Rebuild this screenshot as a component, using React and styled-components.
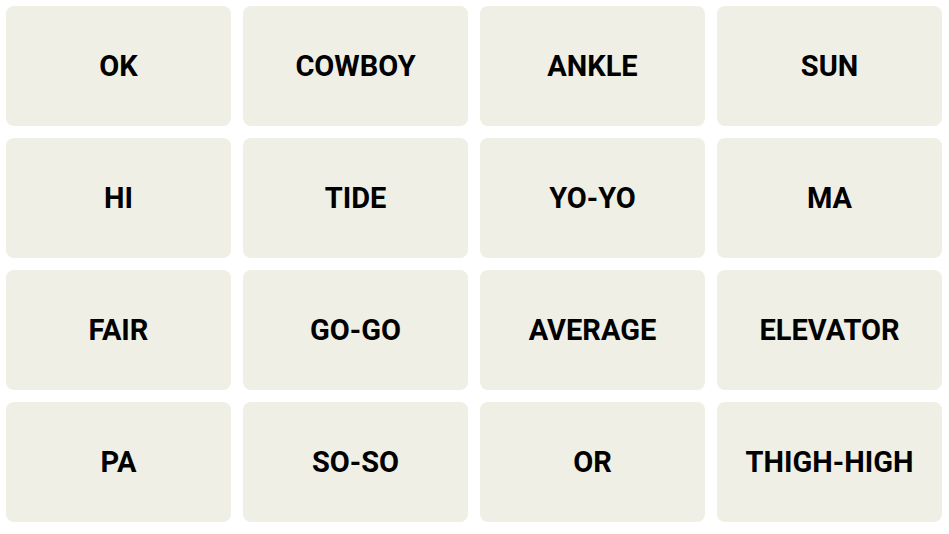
import React from "react";
import styled, { createGlobalStyle } from "styled-components";

const Global = createGlobalStyle`
  html, body { margin: 0; padding: 0; background: #fff; }
`;

const Board = styled.div`
  display: grid;
  grid-template-columns: repeat(4, 225px);
  grid-auto-rows: 120px;
  gap: 12px;
  padding: 6px;
`;

const Tile = styled.div`
  display: flex;
  align-items: center;
  justify-content: center;
  background: #efefe6;
  border-radius: 8px;
  font-family: "Roboto", "Liberation Sans", sans-serif;
  font-weight: 700;
  font-size: 29px;
  color: #000;
  text-transform: uppercase;
  user-select: none;
`;

const words = [
  "OK", "COWBOY", "ANKLE", "SUN",
  "HI", "TIDE", "YO-YO", "MA",
  "FAIR", "GO-GO", "AVERAGE", "ELEVATOR",
  "PA", "SO-SO", "OR", "THIGH-HIGH",
];

export default function App() {
  return (
    <>
      <Global />
      <Board>
        {words.map((w) => (
          <Tile key={w}>{w}</Tile>
        ))}
      </Board>
    </>
  );
}
